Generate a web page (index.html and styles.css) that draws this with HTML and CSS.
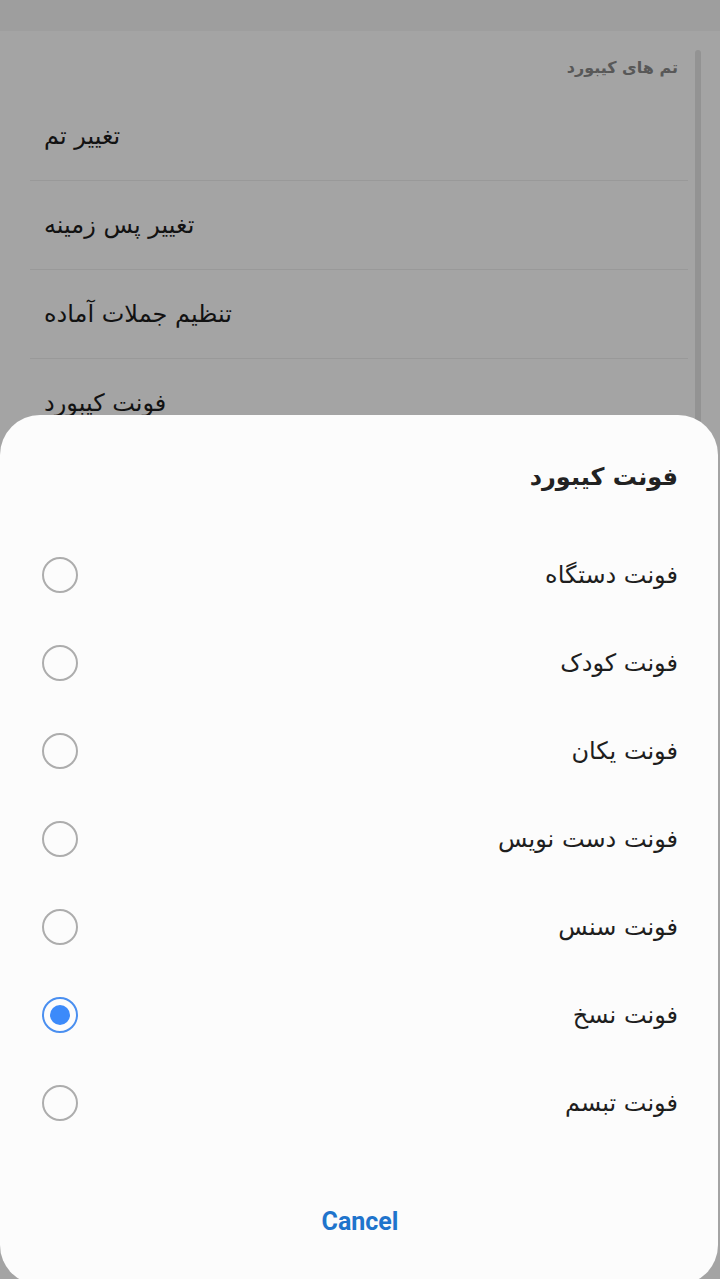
FILE: index.html
```html
<!DOCTYPE html>
<html lang="fa" dir="rtl">
<head>
<meta charset="utf-8">
<title>فونت کیبورد</title>
<link rel="stylesheet" href="styles.css">
</head>
<body>
<div class="statusbar"></div>
<main class="page">
  <div class="scrollbar"></div>
  <section class="settings">
    <h2 class="group-title">تم های کیبورد</h2>
    <ul class="pref-list">
      <li class="pref">تغییر تم</li>
      <li class="pref">تغییر پس زمینه</li>
      <li class="pref">تنظیم جملات آماده</li>
      <li class="pref">فونت کیبورد</li>
    </ul>
  </section>
</main>

<div class="scrim"></div>

<div class="sheet">
  <h1 class="sheet-title">فونت کیبورد</h1>
  <ul class="options">
    <li class="option"><span class="label">فونت دستگاه</span><span class="radio"></span></li>
    <li class="option"><span class="label">فونت کودک</span><span class="radio"></span></li>
    <li class="option"><span class="label">فونت یکان</span><span class="radio"></span></li>
    <li class="option"><span class="label">فونت دست نویس</span><span class="radio"></span></li>
    <li class="option"><span class="label">فونت سنس</span><span class="radio"></span></li>
    <li class="option"><span class="label">فونت نسخ</span><span class="radio checked"></span></li>
    <li class="option"><span class="label">فونت تبسم</span><span class="radio"></span></li>
  </ul>
  <div class="actions"><button class="cancel" dir="ltr">Cancel</button></div>
</div>
</body>
</html>
```

FILE: styles.css
```css
* { box-sizing: border-box; }

html, body {
  margin: 0;
  padding: 0;
  height: 100%;
}

body {
  background: #fcfcfc;
  font-family: "DejaVu Sans", "Noto Sans", sans-serif;
  color: #1c1c1c;
  overflow: hidden;
}

.statusbar {
  height: 31px;
  background: #f3f3f3;
}

.page {
  display: flex;
  flex-direction: row;
  padding: 19px 19px 0 30px;
  gap: 7px;
}

.settings {
  flex: 1;
  padding-top: 2px;
}

.group-title {
  margin: 0;
  height: 32px;
  line-height: 32px;
  padding-right: 10px;
  font-size: 16px;
  font-weight: bold;
  color: #878787;
}

.pref-list {
  list-style: none;
  margin: 8px 0 0 0;
  padding: 0;
}

.pref {
  height: 89px;
  line-height: 89px;
  text-align: left;
  padding-left: 14px;
  font-size: 24px;
  border-bottom: 1.5px solid #ebebeb;
}

.scrollbar {
  width: 6px;
  height: 420px;
  border-radius: 3px 3px 0 0;
  background: #e2e2e2;
}

.scrim {
  position: fixed;
  inset: 0;
  background: rgba(0, 0, 0, 0.35);
}

.sheet {
  position: fixed;
  top: 415px;
  left: 0;
  right: 2px;
  height: 870px;
  background: #fcfcfc;
  border-radius: 40px;
  padding: 40px 40px 0 42px;
}

.sheet-title {
  margin: 0;
  height: 44px;
  line-height: 44px;
  font-size: 24px;
  font-weight: bold;
  color: #222;
}

.options {
  list-style: none;
  margin: 32px 0 0 0;
  padding: 0;
}

.option {
  height: 88px;
  display: flex;
  align-items: center;
  justify-content: space-between;
}

.label {
  font-size: 24px;
  color: #1e1e1e;
}

.radio {
  width: 36px;
  height: 36px;
  border-radius: 50%;
  border: 2px solid #adadad;
  display: flex;
  align-items: center;
  justify-content: center;
}

.radio.checked {
  border-color: #4a8ff0;
}

.radio.checked::after {
  content: "";
  width: 20px;
  height: 20px;
  border-radius: 50%;
  background: #3c8afa;
}

.actions {
  display: flex;
  justify-content: center;
  margin-top: 50px;
}

.cancel {
  height: 48px;
  border: 0;
  background: transparent;
  font-family: Roboto, "Liberation Sans", sans-serif;
  font-weight: bold;
  font-size: 25px;
  color: #1f74cc;
  padding: 0 12px;
}
```
